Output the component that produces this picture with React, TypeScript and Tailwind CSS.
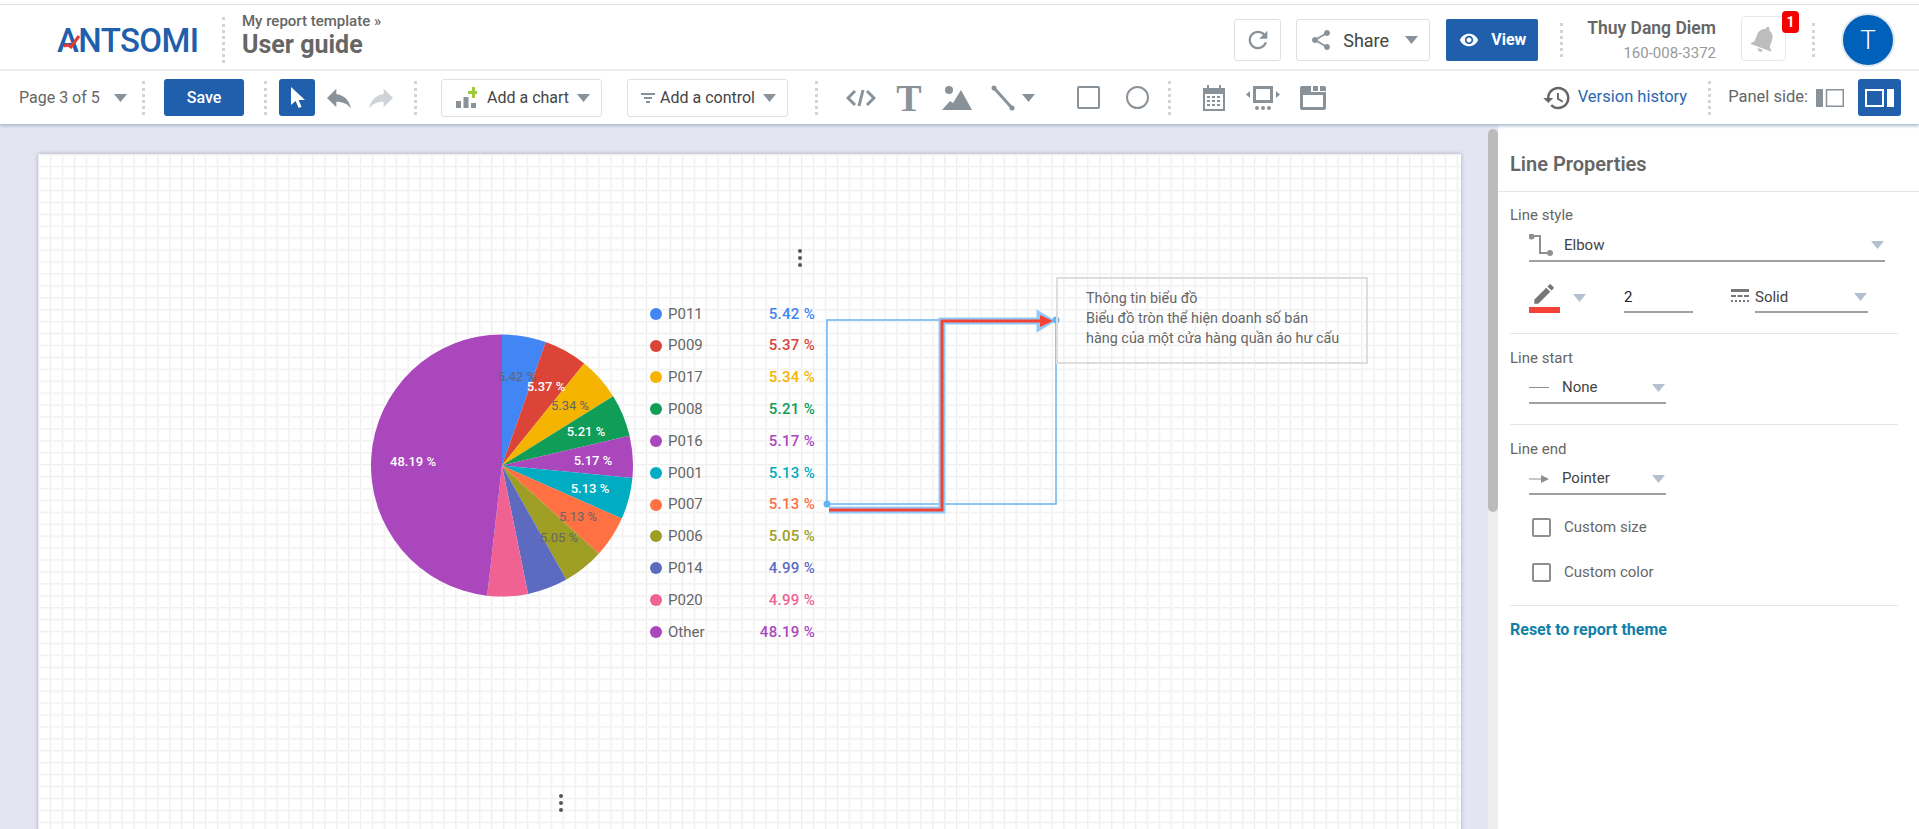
import type { ReactNode } from 'react'

const slices = [
  { name: 'P011', value: 5.42, color: '#4285f4' },
  { name: 'P009', value: 5.37, color: '#db4437' },
  { name: 'P017', value: 5.34, color: '#f4b400' },
  { name: 'P008', value: 5.21, color: '#0f9d58' },
  { name: 'P016', value: 5.17, color: '#ab47bc' },
  { name: 'P001', value: 5.13, color: '#00acc1' },
  { name: 'P007', value: 5.13, color: '#ff7043' },
  { name: 'P006', value: 5.05, color: '#9e9d24' },
  { name: 'P014', value: 4.99, color: '#5c6bc0' },
  { name: 'P020', value: 4.99, color: '#f06292' },
  { name: 'Other', value: 48.19, color: '#ab47bc' },
]

const pieLabels = [
  { text: '5.42 %', x: 517, y: 377, fill: '#666666' },
  { text: '5.37 %', x: 546, y: 387, fill: '#ffffff' },
  { text: '5.34 %', x: 570, y: 406, fill: '#666666' },
  { text: '5.21 %', x: 586, y: 432, fill: '#ffffff' },
  { text: '5.17 %', x: 593, y: 461, fill: '#ffffff' },
  { text: '5.13 %', x: 590, y: 489, fill: '#ffffff' },
  { text: '5.13 %', x: 578, y: 517, fill: '#666666' },
  { text: '5.05 %', x: 559, y: 538, fill: '#666666' },
  { text: '48.19 %', x: 413, y: 462, fill: '#ffffff' },
]

function slicePath(from: number, to: number) {
  const cx = 502
  const cy = 465.5
  const r = 131
  const a = (from / 100) * Math.PI * 2
  const b = (to / 100) * Math.PI * 2
  const large = to - from > 50 ? 1 : 0
  return `M${cx} ${cy}L${cx + r * Math.sin(a)} ${cy - r * Math.cos(a)}A${r} ${r} 0 ${large} 1 ${cx + r * Math.sin(b)} ${cy - r * Math.cos(b)}Z`
}

function Pie() {
  let acc = 0
  const total = slices.reduce((s, x) => s + x.value, 0)
  return (
    <svg className="absolute left-[333px] top-[180px]" width="262" height="264" viewBox="371 334 262 264">
      {slices.map((s) => {
        const from = acc
        acc += (s.value / total) * 100
        return <path key={s.name} d={slicePath(from, acc)} fill={s.color} />
      })}
      {pieLabels.map((l) => (
        <text key={l.x} x={l.x} y={l.y + 4} textAnchor="middle" fontSize="13" fontWeight={l.fill === '#ffffff' ? 500 : 400} fill={l.fill}>
          {l.text}
        </text>
      ))}
    </svg>
  )
}

function Caret({ color = '#8a9299', className = '' }: { color?: string; className?: string }) {
  return (
    <svg className={`shrink-0 ${className}`} width="13" height="8" viewBox="0 0 13 8">
      <path d="M0 0h13L6.500 8z" fill={color} />
    </svg>
  )
}

function Sep({ className = '' }: { className?: string }) {
  return <div className={`h-[34px] w-0 shrink-0 border-l-[3px] border-dotted border-[#d4d4d4] ${className}`} />
}

function Icon({ d, size = 24, color = '#8a9299', className = '' }: { d: string; size?: number; color?: string; className?: string }) {
  return (
    <svg className={`shrink-0 ${className}`} width={size} height={size} viewBox="0 0 24 24" fill={color}>
      <path d={d} />
    </svg>
  )
}

function PanelSelect({ icon, label, className }: { icon: ReactNode; label: string; className: string }) {
  return (
    <div className={`flex items-center border-b-2 border-[#a0a0a0] pt-[1px] text-[15px] text-[#444] ${className}`}>
      {icon}
      <span>{label}</span>
      <Caret color="#b4c0d0" className="ml-auto mr-[1px]" />
    </div>
  )
}

function Check({ label, className }: { label: string; className: string }) {
  return (
    <div className={`ml-[22px] flex h-[20px] items-center ${className}`}>
      <div className="h-[19px] w-[19px] rounded-[2px] border-2 border-[#8f8f8f]" />
      <span className="ml-[13px] text-[15px] text-[#666]">{label}</span>
    </div>
  )
}

function Menu({ className }: { className: string }) {
  return (
    <div className={`absolute flex flex-col gap-[3px] ${className}`}>
      <div className="h-[4px] w-[4px] rounded-full bg-[#555]" />
      <div className="h-[4px] w-[4px] rounded-full bg-[#555]" />
      <div className="h-[4px] w-[4px] rounded-full bg-[#555]" />
    </div>
  )
}

function Header() {
  return (
    <header className="flex h-[67px] shrink-0 items-center border-t border-b-2 border-t-[#dedede] border-b-[#eeeeee] bg-white pt-[6px] pr-[24px]">
      <div className="relative ml-[57px] w-[139px] text-[33px] font-medium leading-[33px] tracking-[-0.6px] text-[#1f5fac]">
        ANTSOMI
        <svg className="absolute left-[6px] top-[11px]" width="18" height="14" viewBox="0 0 18 14">
          <path d="M1 11l4-1 3 2 8-11" fill="none" stroke="#e53935" strokeWidth="3" />
        </svg>
      </div>
      <Sep className="ml-[26px] !h-[46px]" />
      <div className="ml-[17px] mt-[-11px] whitespace-nowrap text-[#666]">
        <div className="text-[15px] font-medium leading-[20px]">My report template »</div>
        <div className="text-[25px] font-bold leading-[28px]">User guide</div>
      </div>
      <div className="flex-1" />
      <button className="flex h-[42px] w-[47px] items-center justify-center rounded-[3px] border border-[#e0e0e0]">
        <Icon size={28} d="M17.650 6.350C16.200 4.900 14.210 4 12 4c-4.420 0-7.990 3.580-7.990 8s3.570 8 7.990 8c3.730 0 6.840-2.550 7.730-6h-2.080c-.82 2.330-3.040 4-5.650 4-3.310 0-6-2.690-6-6s2.690-6 6-6c1.660 0 3.140.69 4.220 1.780L13 11h7V4l-2.350 2.350z" />
      </button>
      <button className="ml-[15px] flex h-[42px] w-[134px] items-center rounded-[3px] border border-[#e0e0e0] pl-[12px] text-[18px] text-[#444]">
        <Icon size={24} d="M18 16.080c-.76 0-1.440.3-1.960.77L8.910 12.700c.05-.23.09-.46.09-.7s-.04-.47-.09-.7l7.050-4.110c.54.5 1.250.81 2.040.81 1.660 0 3-1.340 3-3s-1.340-3-3-3-3 1.340-3 3c0 .24.04.47.09.7L8.040 9.810C7.500 9.310 6.790 9 6 9c-1.660 0-3 1.340-3 3s1.340 3 3 3c.79 0 1.500-.31 2.040-.81l7.120 4.160c-.05.21-.08.43-.08.65 0 1.610 1.310 2.920 2.920 2.920 1.610 0 2.920-1.310 2.920-2.920s-1.310-2.920-2.920-2.920z" />
        <span className="ml-[10px]">Share</span>
        <Caret className="ml-[16px]" />
      </button>
      <button className="ml-[16px] flex h-[42px] w-[92px] items-center rounded-[2px] bg-[#1f5fac] pl-[13px] text-[16px] font-bold text-white">
        <Icon size={20} color="#ffffff" d="M12 4.500C7 4.500 2.730 7.610 1 12c1.730 4.390 6 7.500 11 7.500s9.270-3.110 11-7.500c-1.730-4.390-6-7.500-11-7.500zM12 17c-2.760 0-5-2.240-5-5s2.240-5 5-5 5 2.240 5 5-2.240 5-5 5zm0-8c-1.660 0-3 1.340-3 3s1.340 3 3 3 3-1.340 3-3-1.340-3-3-3z" />
        <span className="ml-[12px]">View</span>
      </button>
      <Sep className="ml-[22px]" />
      <div className="ml-[24px] text-right">
        <div className="whitespace-nowrap text-[17.500px] font-semibold leading-[20px] text-[#666]">Thuy Dang Diem</div>
        <div className="mt-[5px] text-[15px] leading-[20px] text-[#999]">160-008-3372</div>
      </div>
      <div className="relative ml-[25px] mt-[-3px] flex h-[45px] w-[45px] items-center justify-center rounded-[4px] border border-[#e8e8e8]">
        <Icon size={32} color="#bdbdbd" className="rotate-[20deg]" d="M12 22c1.100 0 2-.9 2-2h-4c0 1.100.9 2 2 2zm6-6v-5c0-3.070-1.630-5.640-4.500-6.320V4c0-.83-.67-1.500-1.500-1.500s-1.500.67-1.500 1.500v.68C7.640 5.360 6 7.920 6 11v5l-2 2v1h16v-1l-2-2z" />
        <span className="absolute left-[40px] top-[-6px] flex h-[22px] w-[17px] items-center justify-center rounded-[4px] bg-[#f40000] text-[14px] font-bold text-white">1</span>
      </div>
      <Sep className="ml-[26px]" />
      <div className="ml-[26px] flex h-[54px] w-[54px] items-center justify-center rounded-full border-2 border-[#e4e8ee] bg-[#0061ba] text-[26px] font-light text-white">
        T
      </div>
    </header>
  )
}

function Toolbar() {
  return (
    <div className="relative z-10 flex h-[53px] shrink-0 items-center bg-white text-[16px] shadow-[0_2px_3px_#a9bccd]">
      <span className="ml-[19px] w-[81px] whitespace-nowrap text-[#666]">Page 3 of 5</span>
      <Caret className="ml-[14px]" />
      <Sep className="ml-[15px]" />
      <button className="ml-[19px] h-[37px] w-[80px] rounded-[3px] bg-[#1f5fac] text-[16px] font-medium text-white">Save</button>
      <Sep className="ml-[20px]" />
      <button className="ml-[12px] flex h-[37px] w-[36px] items-center justify-center rounded-[3px] bg-[#1f5fac]">
        <svg width="20" height="24" viewBox="0 0 20 24">
          <path d="M4 1v18l4.600-4 3 7 3-1.300-3-6.700H18z" fill="#ffffff" />
        </svg>
      </button>
      <Icon size={32} className="ml-[8px]" d="M10 9V5l-7 7 7 7v-4.100c5 0 8.500 1.600 11 5.100-1-5-4-10-11-11z" />
      <Icon size={32} color="#cfd3d7" className="ml-[10px]" d="M14 9V5l7 7-7 7v-4.100c-5 0-8.500 1.600-11 5.100 1-5 4-10 11-11z" />
      <Sep className="ml-[17px]" />
      <button className="ml-[24px] flex h-[38px] w-[161px] items-center rounded-[3px] border border-[#e0e0e0] pl-[13px] text-[#444]">
        <svg className="shrink-0" width="22" height="23" viewBox="0 0 22 23">
          <path d="M1 15h5v7H1zM8.500 11h5v11h-5zM16 17h5v5h-5z" fill="#8a9299" />
          <path d="M13 5h4V1h3v4h2v3h-2v4h-3V8h-4z" fill="#9ccc3c" />
        </svg>
        <span className="ml-[10px] whitespace-nowrap">Add a chart</span>
        <Caret className="ml-[8px]" />
      </button>
      <button className="ml-[25px] flex h-[38px] w-[161px] items-center rounded-[3px] border border-[#e0e0e0] pl-[13px] text-[#444]">
        <svg className="shrink-0" width="14" height="10" viewBox="0 0 14 10">
          <path d="M0 0h14v2H0zM3 4h8v2H3zM5 8h4v2H5z" fill="#8a9299" />
        </svg>
        <span className="ml-[5px] whitespace-nowrap">Add a control</span>
        <Caret className="ml-[8px]" />
      </button>
      <Sep className="ml-[27px]" />
      <svg className="ml-[28px] shrink-0" width="30" height="24" viewBox="0 0 30 24" fill="none" stroke="#8a9299" strokeWidth="3">
        <path d="M9 5l-7 7 7 7M21 5l7 7-7 7M17 4l-4 16" />
      </svg>
      <span className="ml-[19px] w-[28px] text-center font-['Liberation_Serif',serif] text-[38px] font-bold leading-[38px] text-[#8a9299]">T</span>
      <svg className="ml-[19px] shrink-0" width="30" height="26" viewBox="0 0 30 26" fill="#8a9299">
        <circle cx="7" cy="5" r="4" />
        <path d="M0 25l8-9 3 2 8-13 11 20z" />
      </svg>
      <svg className="ml-[19px] shrink-0" width="24" height="26" viewBox="0 0 24 26" fill="#8a9299">
        <path d="M3 3l18 20" stroke="#8a9299" strokeWidth="3" />
        <circle cx="3" cy="3" r="2.500" />
        <circle cx="21" cy="23" r="2.500" />
      </svg>
      <Caret className="ml-[7px]" />
      <div className="ml-[42px] h-[23px] w-[23px] shrink-0 rounded-[2px] border-2 border-[#8a9299]" />
      <div className="ml-[26px] h-[23px] w-[23px] shrink-0 rounded-full border-2 border-[#8a9299]" />
      <Sep className="ml-[19px]" />
      <svg className="ml-[30px] shrink-0" width="26" height="26" viewBox="0 0 26 26" fill="#8a9299">
        <path fillRule="evenodd" d="M2 3h4V0h2v3h10V0h2v3h4v23H2zM4 9v15h18V9z" />
        <path d="M6 11h3v2H6zM11 11h3v2h-3zM16 11h3v2h-3zM6 15h3v2H6zM11 15h3v2h-3zM16 15h3v2h-3zM6 19h3v2H6zM11 19h3v2h-3zM16 19h3v2h-3z" />
      </svg>
      <svg className="ml-[18px] shrink-0" width="36" height="26" viewBox="0 0 36 26" fill="#8a9299">
        <path fillRule="evenodd" d="M8 1h20v17H8zM11 4v11h14V4z" />
        <path d="M5 6v7L1 9.500zM31 6v7l4-3.500z" />
        <circle cx="12" cy="23" r="2" />
        <circle cx="18" cy="23" r="2" />
        <circle cx="24" cy="23" r="2" />
      </svg>
      <svg className="ml-[19px] shrink-0" width="26" height="24" viewBox="0 0 26 24" fill="#8a9299">
        <path fillRule="evenodd" d="M2 0h9v6h15v16a2 2 0 0 1-2 2H2a2 2 0 0 1-2-2V2a2 2 0 0 1 2-2zM3 9v12h20V9z" />
        <path d="M13 0h5v5h-5zM20 0h4a2 2 0 0 1 2 2v3h-6z" />
      </svg>
      <div className="flex-1" />
      <Icon size={30} color="#666666" d="M13 3c-4.970 0-9 4.030-9 9H1l3.890 3.890.07.140L9 12H6c0-3.870 3.130-7 7-7s7 3.130 7 7-3.130 7-7 7c-1.930 0-3.680-.79-4.940-2.060l-1.420 1.420C8.270 19.990 10.510 21 13 21c4.970 0 9-4.030 9-9s-4.030-9-9-9zm-1 5v5l4.280 2.540.72-1.210-3.500-2.080V8H12z" />
      <a className="ml-[6px] whitespace-nowrap text-[16.500px] text-[#2b67b0]">Version history</a>
      <Sep className="ml-[21px]" />
      <span className="ml-[17px] whitespace-nowrap text-[16.500px] text-[#666]">Panel side:</span>
      <svg className="ml-[8px] shrink-0" width="28" height="18" viewBox="0 0 28 18">
        <path d="M0 0h7v18H0z" fill="#8a9299" />
        <path d="M10.500 .75h16.750v16.500H10.500z" fill="none" stroke="#8a9299" strokeWidth="1.500" />
      </svg>
      <button className="ml-[14px] mr-[18px] flex h-[37px] w-[43px] items-center justify-center rounded-[3px] bg-[#1f5fac]">
        <svg width="29" height="18" viewBox="0 0 29 18">
          <path d="M1 1h17v16H1z" fill="none" stroke="#ffffff" strokeWidth="2" />
          <path d="M22 0h7v18h-7z" fill="#ffffff" />
        </svg>
      </button>
    </div>
  )
}

function Canvas() {
  return (
    <div className="relative ml-[38px] mt-[30px] h-[800px] w-[1423px] bg-white bg-[linear-gradient(to_right,#efefef_1px,#f9f9f9_1px,#f9f9f9_2px,transparent_2px),linear-gradient(to_bottom,#efefef_1px,#f9f9f9_1px,#f9f9f9_2px,transparent_2px)] bg-[size:11.930px_11.930px] shadow-[0_0_4px_#a8a8b8]">
      <Menu className="left-[760px] top-[95px]" />
      <Pie />
      <div className="absolute left-[612px] top-[144px] w-[203px] pr-[38px]">
        {slices.map((s) => (
          <div key={s.name} className="flex h-[31.800px] items-center text-[15px]">
            <span className="h-[12px] w-[12px] rounded-full" style={{ backgroundColor: s.color }} />
            <span className="ml-[6px] text-[#666]">{s.name}</span>
            <span className="ml-auto font-medium tracking-[0.3px]" style={{ color: s.color }}>
              {s.value.toFixed(2)} %
            </span>
          </div>
        ))}
      </div>
      <svg className="absolute left-0 top-0" width="1423" height="800" viewBox="38 154 1423 800" fill="none">
        <rect x="827" y="320" width="229" height="184" stroke="#64b5f6" strokeWidth="1.500" />
        <path d="M829 510H942V321H1040" stroke="#90caf9" strokeWidth="7" />
        <path d="M1038 312l15 9-15 9z" fill="#90caf9" stroke="#90caf9" strokeWidth="3" />
        <path d="M829 510H942V321H1042" stroke="#f44336" strokeWidth="3" />
        <path d="M1040 315l13 6-13 6z" fill="#f44336" />
        <circle cx="827" cy="504" r="3.500" fill="#64b5f6" />
        <circle cx="1056" cy="320" r="3.500" fill="#64b5f6" />
      </svg>
      <div className="absolute left-[1018px] top-[123px] h-[87px] w-[312px] border-2 border-[#dddddd] pl-[28px] pt-[10px] text-[14.400px] leading-[20px] text-[#666]">
        <div>Thông tin biểu đồ</div>
        <div>Biểu đồ tròn thể hiện doanh số bán</div>
        <div>hàng của một cửa hàng quần áo hư cấu</div>
      </div>
      <Menu className="left-[521px] top-[640px]" />
    </div>
  )
}

function Panel() {
  return (
    <aside className="flex w-[421px] shrink-0 flex-col bg-white">
      <div className="flex h-[68px] shrink-0 items-center border-b border-[#e5e5e5] pl-[12px] pt-[13px] text-[20px] font-semibold text-[#666]">
        Line Properties
      </div>
      <div className="pl-[12px]">
        <div className="mt-[13px] text-[15px] leading-[20px] text-[#666]">Line style</div>
        <PanelSelect
          className="ml-[19px] mt-[4px] h-[33px] w-[356px]"
          label="Elbow"
          icon={
            <svg className="mr-[11px] shrink-0" width="24" height="22" viewBox="0 0 24 22" fill="none" stroke="#8f8f8f" strokeWidth="2">
              <path d="M2 2h9v17h11" />
              <circle cx="2.500" cy="2.500" r="2" fill="#8f8f8f" />
              <circle cx="21" cy="19" r="2" fill="#8f8f8f" />
            </svg>
          }
        />
        <div className="ml-[19px] mt-[20px] flex h-[31px] items-start">
          <div className="w-[31px]">
            <Icon size={26} color="#777777" className="ml-[2px] mt-[-1px]" d="M3 17.250V21h3.750L17.810 9.940l-3.750-3.750L3 17.250zM20.710 7.040c.39-.39.39-1.020 0-1.410l-2.340-2.340c-.39-.39-1.020-.39-1.410 0l-1.830 1.830 3.750 3.750 1.830-1.830z" />
            <div className="h-[6px] bg-[#f44336]" />
          </div>
          <Caret color="#b4c0d0" className="ml-[13px] mt-[12px]" />
          <div className="ml-[38px] flex h-[31px] w-[69px] items-center border-b-2 border-[#a0a0a0] pt-[1px] text-[15px] text-[#222]">2</div>
          <svg className="ml-[38px] mt-[7px] shrink-0" width="18" height="16" viewBox="0 0 18 16" fill="#777777">
            <path d="M0 0h18v3H0zM0 6h5v2H0zM6.500 6h5v2h-5zM13 6h5v2h-5zM0 11h2v2H0zM4 11h2v2H4zM8 11h2v2H8zM12 11h2v2h-2zM16 11h2v2h-2z" />
          </svg>
          <div className="ml-[6px] flex h-[31px] w-[113px] items-center justify-between border-b-2 border-[#a0a0a0] pt-[1px] text-[15px] text-[#444]">
            Solid
            <Caret color="#b4c0d0" className="mr-[1px]" />
          </div>
        </div>
      </div>
      <div className="ml-[12px] mt-[20px] h-px w-[388px] bg-[#e5e5e5]" />
      <div className="pl-[12px]">
        <div className="mt-[14px] text-[15px] leading-[20px] text-[#666]">Line start</div>
        <PanelSelect
          className="ml-[19px] mt-[4px] h-[32px] w-[137px]"
          label="None"
          icon={<div className="mr-[13px] h-px w-[20px] bg-[#8f8f8f]" />}
        />
      </div>
      <div className="ml-[12px] mt-[20px] h-px w-[388px] bg-[#e5e5e5]" />
      <div className="pl-[12px]">
        <div className="mt-[14px] text-[15px] leading-[20px] text-[#666]">Line end</div>
        <PanelSelect
          className="ml-[19px] mt-[4px] h-[32px] w-[137px]"
          label="Pointer"
          icon={
            <svg className="mr-[13px] shrink-0" width="20" height="8" viewBox="0 0 20 8">
              <path d="M0 3.500h13v1H0z" fill="#8f8f8f" />
              <path d="M12 0l8 4-8 4z" fill="#8f8f8f" />
            </svg>
          }
        />
        <Check label="Custom size" className="mt-[22px]" />
        <Check label="Custom color" className="mt-[25px]" />
      </div>
      <div className="ml-[12px] mt-[23px] h-px w-[388px] bg-[#e5e5e5]" />
      <div className="ml-[12px] mt-[14px] text-[16px] font-bold leading-[20px] text-[#127fa8]">Reset to report theme</div>
    </aside>
  )
}

export default function App() {
  return (
    <div className="flex h-screen w-full flex-col overflow-hidden bg-white pt-[4px] font-['Roboto',sans-serif]">
      <Header />
      <Toolbar />
      <div className="flex min-h-0 flex-1 bg-[#e3e5f3]">
        <main className="min-w-0 flex-1 overflow-hidden">
          <Canvas />
        </main>
        <div className="flex w-[10px] shrink-0 flex-col pt-[5px]">
          <div className="flex-1 rounded-t-[5px] bg-[#eeeeee]">
            <div className="h-[383px] rounded-[5px] bg-[#bbbbbb]" />
          </div>
        </div>
        <Panel />
      </div>
    </div>
  )
}
